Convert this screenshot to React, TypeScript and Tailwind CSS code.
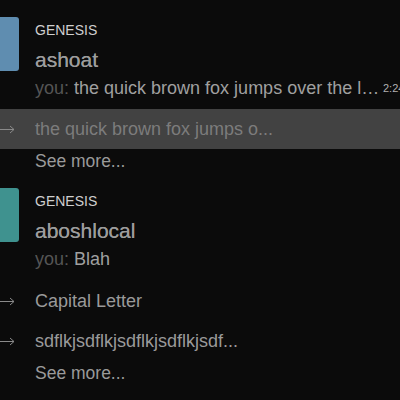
const font = { fontFamily: '"Liberation Sans", Arial, sans-serif' };

interface Thread {
  text: string;
  active?: boolean;
}

interface Conversation {
  community: string;
  name: string;
  last: string;
  time?: string;
  avatar: string;
  threads: Thread[];
}

const conversations: Conversation[] = [
  {
    community: "GENESIS",
    name: "ashoat",
    last: "the quick brown fox jumps over the lazy dog",
    time: "2:24 PM",
    avatar: "bg-[#5f8db0]",
    threads: [{ text: "the quick brown fox jumps o...", active: true }],
  },
  {
    community: "GENESIS",
    name: "aboshlocal",
    last: "Blah",
    avatar: "bg-[#3f928f]",
    threads: [{ text: "Capital Letter" }, { text: "sdflkjsdflkjsdflkjsdflkjsdf..." }],
  },
];

function Arrow() {
  return (
    <svg width="15" height="10" viewBox="0 0 15 10" fill="none" stroke="#8a8a8a" strokeWidth="1">
      <path d="M0 5.5H14M10 2L14 5.5L10 9" />
    </svg>
  );
}

function ConversationItem({ c, first }: { c: Conversation; first: boolean }) {
  return (
    <div className={first ? "pt-[16px]" : "pt-[14px]"}>
      <div className="flex gap-[16px]">
        <div className={`w-[19px] h-[54px] mt-[1px] shrink-0 rounded-r-[3px] ${c.avatar}`} />
        <div className="flex flex-col min-w-0">
          <div className="h-[29px] flex items-center text-[14px] text-[#cfcfcf]">{c.community}</div>
          <div className="h-[29px] flex items-center text-[21px] text-[#9c9c9c] [text-shadow:0_0_0.4px_#9c9c9c]">{c.name}</div>
          <div className="h-[29px] flex items-center whitespace-nowrap">
            <span className="w-[345px] shrink-0 truncate text-[18px] text-[#a0a0a0]">
              <span className="text-[#555555]">you: </span>
              {c.last}
            </span>
            {c.time && <span className="ml-[3px] text-[11px] text-[#b0b0b0]">{c.time}</span>}
          </div>
        </div>
      </div>
      <div className={c.threads.length > 1 ? "mt-[7px]" : "mt-[6px]"}>
        {c.threads.map((t) => (
          <div
            key={t.text}
            className={`flex items-center h-[40px] text-[18px] whitespace-nowrap ${t.active ? "bg-[#424242] text-[#7c7c7c]" : "text-[#9a9a9a]"}`}
          >
            <span className="w-[35px] shrink-0 flex items-center">
              <Arrow />
            </span>
            <span>{t.text}</span>
          </div>
        ))}
        <div className="h-[24px] flex items-center pl-[35px] text-[17.5px] text-[#9a9a9a]">See more...</div>
      </div>
    </div>
  );
}

export default function App() {
  return (
    <div className="w-[400px] h-[400px] overflow-hidden bg-[#0b0b0b]" style={font}>
      {conversations.map((c, i) => (
        <ConversationItem key={c.name} c={c} first={i === 0} />
      ))}
    </div>
  );
}
